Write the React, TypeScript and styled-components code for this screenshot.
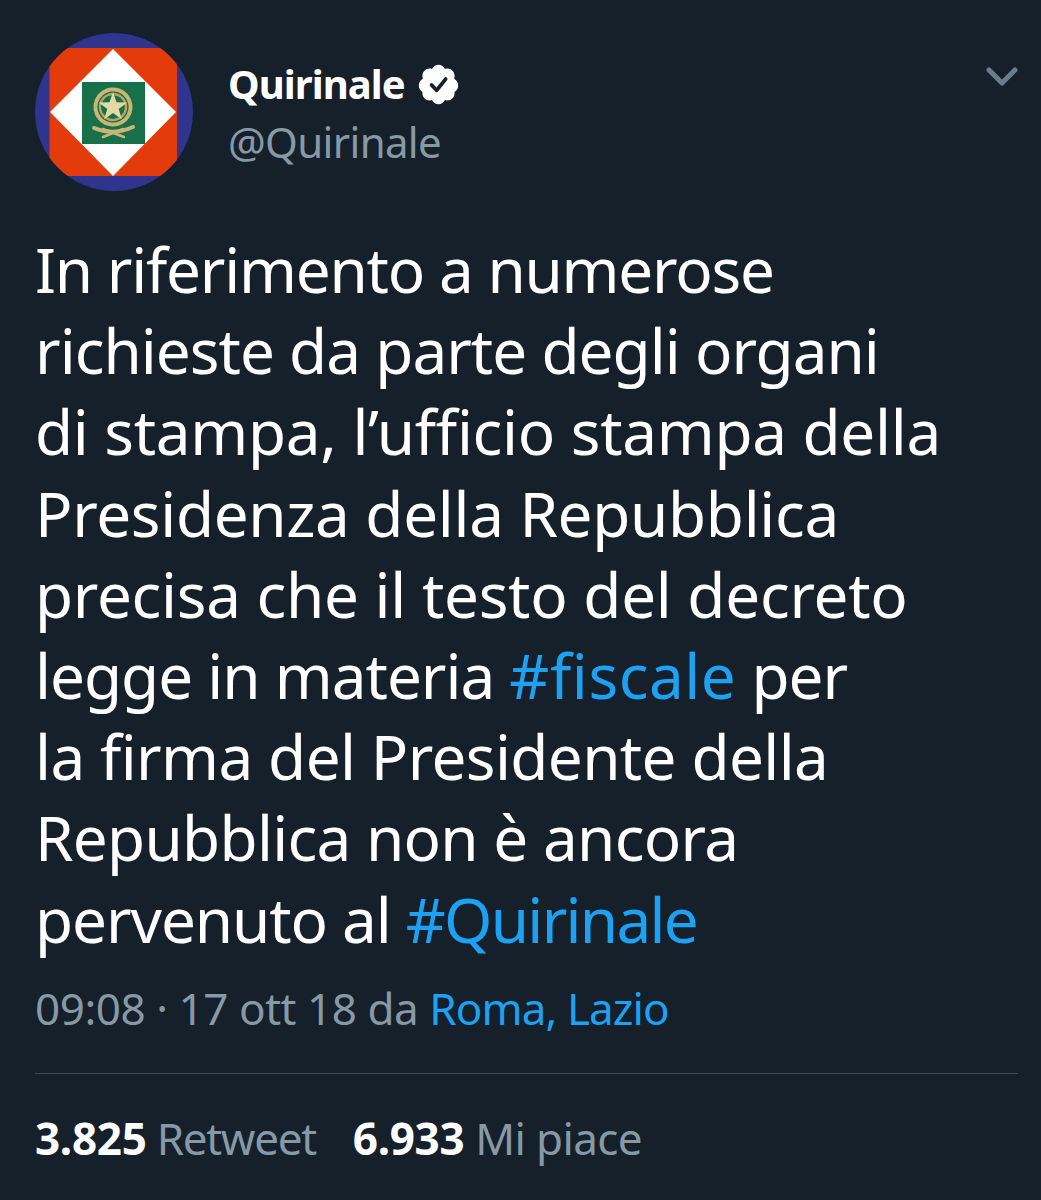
import React from "react";
import styled, { createGlobalStyle } from "styled-components";

const Global = createGlobalStyle`
  html, body { margin: 0; padding: 0; background: #15202b; }
`;

const Page = styled.main`
  width: 1041px;
  height: 1200px;
  box-sizing: border-box;
  overflow: hidden;
  background: #15202b;
  padding: 33px 23px 0 35px;
  font-family: "Noto Sans", "Open Sans", sans-serif;
  color: #fff;
`;

const Header = styled.header`
  display: flex;
  align-items: flex-start;
  height: 158px;
`;

const Identity = styled.div`
  flex: 1;
  margin-left: 35px;
  padding-top: 25px;
`;

const NameRow = styled.div`
  display: flex;
  align-items: center;
  gap: 11px;
  height: 52px;
`;

const Name = styled.span`
  font-size: 40px;
  font-weight: 700;
  letter-spacing: -0.95px;
  line-height: 52px;
`;

const Handle = styled.div`
  font-size: 42px;
  line-height: 64px;
  letter-spacing: -0.65px;
  color: #8899a6;
`;

const Chevron = styled.svg`
  width: 32px;
  height: 22px;
  margin-top: 33px;
  flex: none;
`;

const Tweet = styled.p`
  margin: 38px 0 0 0;
  font-size: 62px;
  line-height: 81.2px;
`;

const Line = styled.span<{ $track: number }>`
  display: block;
  white-space: nowrap;
  letter-spacing: ${(p) => p.$track}px;
`;

const Tag = styled.span<{ $track?: number }>`
  color: #1da1f2;
  ${(p) => (p.$track !== undefined ? `letter-spacing: ${p.$track}px;` : "")}
`;

const Meta = styled.div`
  margin: 20px 0 0 0;
  font-size: 44px;
  line-height: 56px;
  letter-spacing: -0.45px;
  color: #8899a6;
  white-space: nowrap;
`;

const Rule = styled.hr`
  margin: 37px 0 0;
  border: 0;
  height: 1px;
  background: #3d4a57;
`;

const Stats = styled.div`
  display: flex;
  gap: 37px;
  margin: 36px 0 0 0;
  font-size: 44px;
  line-height: 56px;
  color: #8899a6;
`;

const Stat = styled.span<{ $track: number }>`
  letter-spacing: ${(p) => p.$track}px;
`;

const Count = styled.strong`
  color: #fff;
  font-weight: 700;
  letter-spacing: -0.3px;
`;

const Avatar = () => (
  <svg width="158" height="158" viewBox="35 33 158 158" style={{ flex: "none" }}>
    <defs>
      <clipPath id="disc"><circle cx="114" cy="112" r="79" /></clipPath>
    </defs>
    <g clipPath="url(#disc)">
      <rect x="35" y="33" width="158" height="158" fill="#2f348c" />
      <rect x="49.500" y="48" width="127.500" height="128" fill="#e33b0c" />
      <polygon points="113,49 176,112 113,176 50,112" fill="#fff" />
      <rect x="82" y="82" width="63" height="62" fill="#18704a" />
      <g fill="none" stroke="#c9b673" strokeLinecap="round">
        <circle cx="113" cy="107" r="17.500" strokeWidth="4" strokeDasharray="3.500 1.500" />
        <circle cx="113" cy="107" r="13" strokeWidth="2.500" strokeDasharray="5 2" stroke="#b7a561" />
        <path d="M94 128 Q113 136 133 127" strokeWidth="4" />
        <path d="M103 137 L123 129 M124 137 L103 129" strokeWidth="2.500" />
      </g>
      <polygon
        points="113,92 116.500,102.200 127.300,102.400 118.700,108.900 121.800,119.200 113,113 104.200,119.200 107.300,108.900 98.700,102.400 109.500,102.200"
        fill="#e4d9a2"
      />
    </g>
  </svg>
);

const Verified = () => (
  <svg width="45" height="45" viewBox="0 0 24 24">
    <path
      fill="#fff"
      d="M22.500 12.500c0-1.580-.875-2.950-2.148-3.600.154-.435.238-.905.238-1.400 0-2.210-1.710-3.998-3.818-3.998-.47 0-.92.084-1.336.25C14.818 2.415 13.510 1.500 12 1.500s-2.816.917-3.437 2.250c-.415-.165-.866-.25-1.336-.25-2.110 0-3.818 1.790-3.818 4 0 .494.083.964.237 1.400-1.272.65-2.147 2.018-2.147 3.600 0 1.495.782 2.798 1.942 3.486-.02.17-.032.34-.032.514 0 2.210 1.708 4 3.818 4 .47 0 .92-.086 1.335-.25.620 1.334 1.926 2.250 3.437 2.250 1.512 0 2.818-.916 3.437-2.250.415.163.865.248 1.336.248 2.110 0 3.818-1.790 3.818-4 0-.174-.012-.344-.033-.513 1.158-.687 1.943-1.990 1.943-3.484z"
    />
    <path
      fill="none"
      stroke="#15202b"
      strokeWidth="2"
      strokeLinecap="round"
      strokeLinejoin="round"
      d="M8.300 12.300l2.700 2.800 4.800-6"
    />
  </svg>
);

export default function App() {
  return (
    <>
      <Global />
      <Page>
        <Header>
          <Avatar />
          <Identity>
            <NameRow>
              <Name>Quirinale</Name>
              <Verified />
            </NameRow>
            <Handle>@Quirinale</Handle>
          </Identity>
          <Chevron viewBox="0 0 32 22">
            <path d="M3 4 L16 17 L29 4" fill="none" stroke="#6b7d8d" strokeWidth="5" strokeLinecap="round" strokeLinejoin="round" />
          </Chevron>
        </Header>
        <Tweet>
          <Line $track={-1.22}>In riferimento a numerose</Line>
          <Line $track={-0.97}>richieste da parte degli organi</Line>
          <Line $track={-0.3}>di stampa, l’ufficio stampa della</Line>
          <Line $track={-0.33}>Presidenza della Repubblica</Line>
          <Line $track={-0.28}>precisa che il testo del decreto</Line>
          <Line $track={-1}>legge in materia <Tag $track={0.55}>#fiscale</Tag> per</Line>
          <Line $track={-0.62}>la firma del Presidente della</Line>
          <Line $track={-0.72}>Repubblica non è ancora</Line>
          <Line $track={-1.08}>pervenuto al <Tag $track={-1.7}>#Quirinale</Tag></Line>
        </Tweet>
        <Meta>09:08 · 17 ott 18 da <Tag $track={-0.9}>Roma, Lazio</Tag></Meta>
        <Rule />
        <Stats>
          <Stat $track={-1.3}><Count>3.825</Count> Retweet</Stat>
          <Stat $track={-0.6}><Count>6.933</Count> Mi piace</Stat>
        </Stats>
      </Page>
    </>
  );
}
